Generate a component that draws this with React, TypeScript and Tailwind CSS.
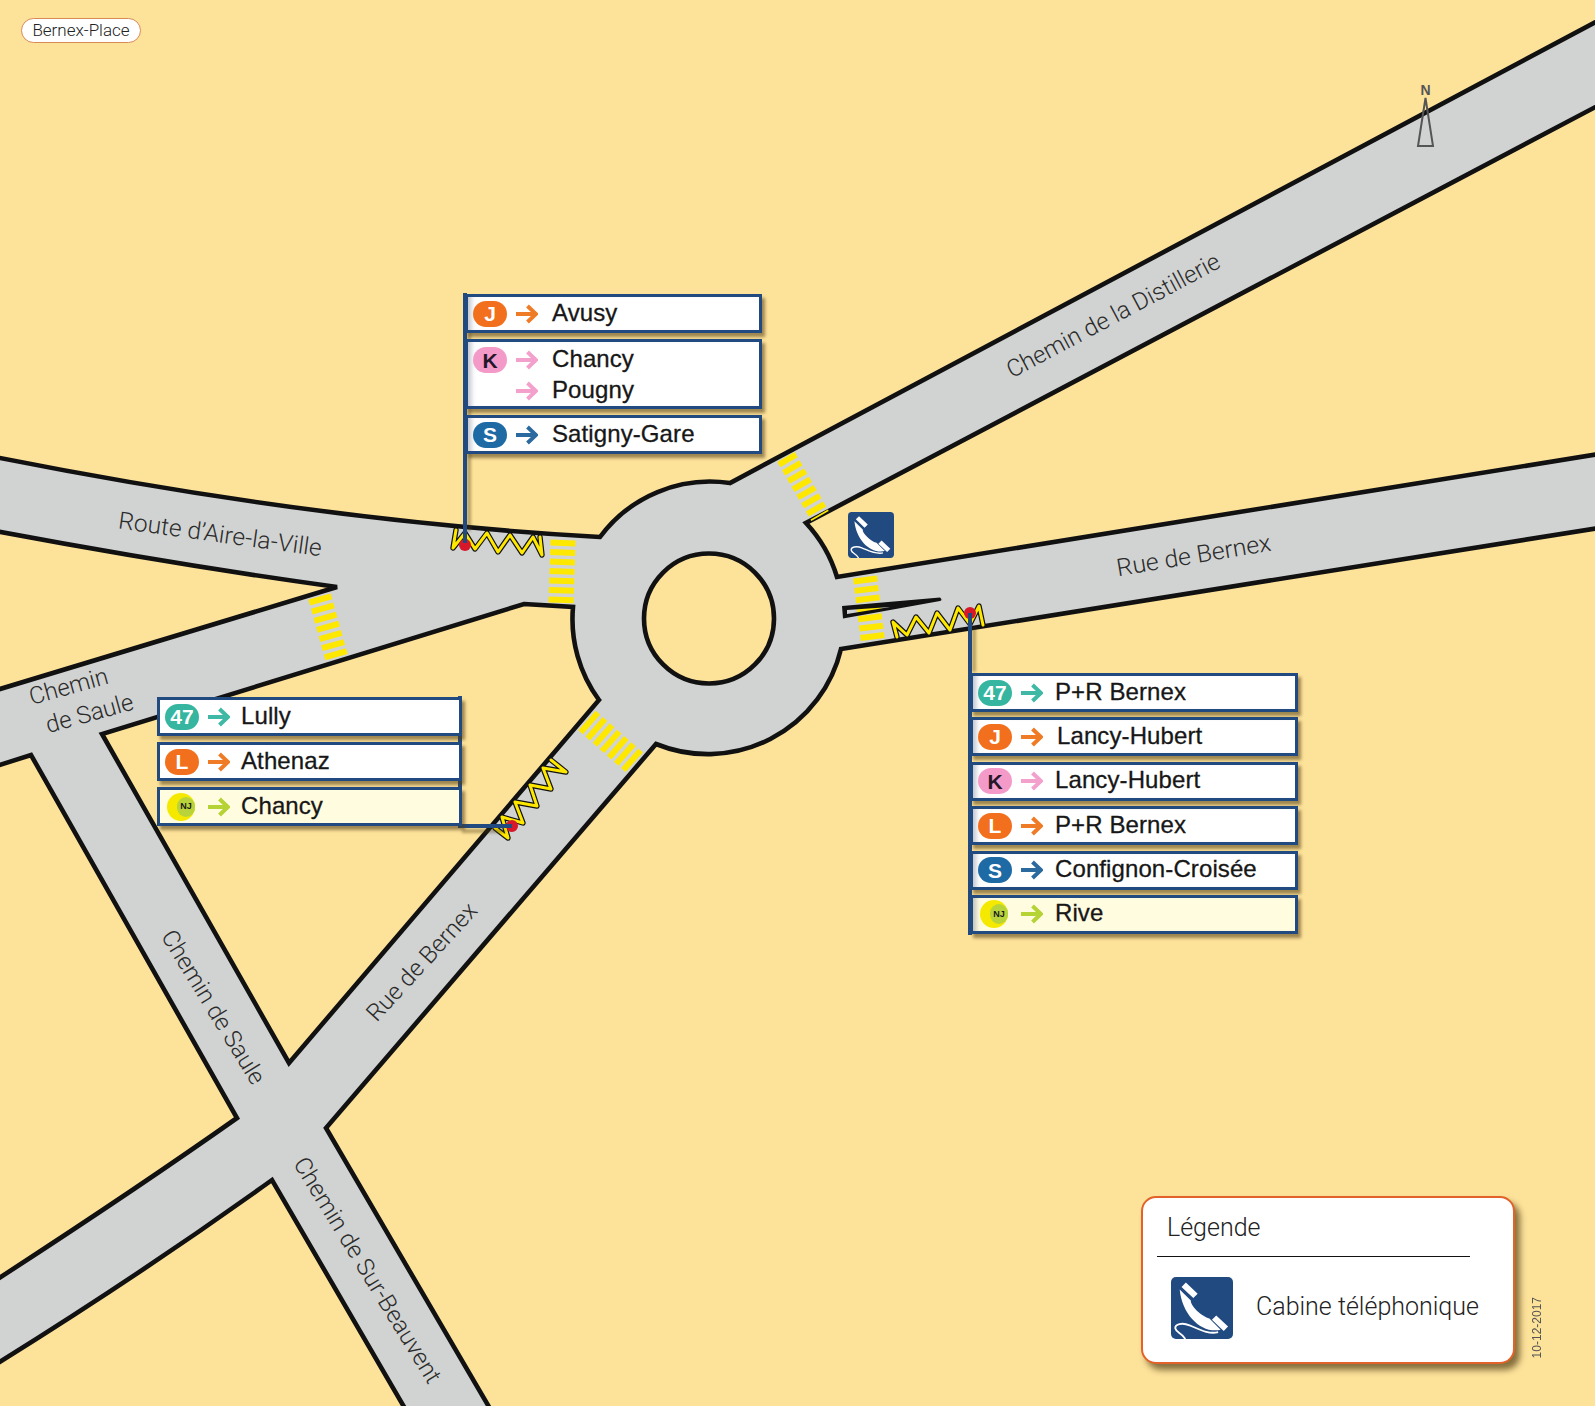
const ROAD_PATH =
  "M-10 456 C200 498 400 526 600 537 A137 137 0 0 1 730 483 L1605 17 L1605 102 L806 523 A137 137 0 0 1 837 577 L1605 453 L1605 527 L841 649 A137 137 0 0 1 656 744 L326 1128 L499 1424 L414 1424 L272 1180 Q140 1275 -10 1368 L-10 1284 Q135 1190 237 1118 L31 755 L-10 768 L-10 692 L337 587 Q170 564 -10 530 Z " +
  "M524 604 L573 607 A137 137 0 0 0 599 700 L289 1063 L102 734 Z";

const stripes = [
  { x1: 786, y1: 457, x2: 820, y2: 516, w: 20 },
  { x1: 563, y1: 540, x2: 561, y2: 604, w: 25 },
  { x1: 319.5, y1: 596.5, x2: 337, y2: 659, w: 23 },
  { x1: 587, y1: 720.5, x2: 635, y2: 763, w: 26 },
  { x1: 865, y1: 577, x2: 873, y2: 642, w: 24 },
];

const zigzags = [
  "456,530 453,548 465,533 475,549 487,533 498,552 510,535 522,553 533,537 542,555 540,537",
  "897,637 893,622 907,635 916,617 929,633 937,613 950,630 958,608 970,624 979,606 983,625",
  "495,828 508,838 502,817 523,823 515,802 537,806 530,785 551,789 543,768 566,772 551,760",
];

const roadLabels = [
  { text: "Route d’Aire-la-Ville", x: 220, y: 536, a: 7.8, len: 205 },
  { text: "Chemin de la Distillerie", x: 1114, y: 317, a: -28 },
  { text: "Rue de Bernex", x: 1194, y: 557, a: -9.5, len: 156 },
  { text: "Chemin", x: 69, y: 688, a: -15.5, len: 81 },
  { text: "de Saule", x: 90, y: 715, a: -15.5, len: 90 },
  { text: "Rue de Bernex", x: 423, y: 963, a: -47.5 },
  { text: "Chemin de Saule", x: 212, y: 1008, a: 58.5, len: 176 },
  { text: "Chemin de Sur-Beauvent", x: 366, y: 1271, a: 58.5, len: 260 },
];

function Arrow({ className }: { className: string }) {
  return (
    <svg viewBox="0 0 22 20" className={`h-[20px] w-[22px] shrink-0 ${className}`} fill="none" stroke="currentColor" strokeWidth="4">
      <path d="M0 10H19M11.5 2l8.5 8-8.5 8" />
    </svg>
  );
}

function PhoneIcon({ className }: { className: string }) {
  return (
    <svg viewBox="0 0 100 100" className={className}>
      <rect width="100" height="100" rx="8" fill="#214a80" />
      <path d="M24 9L43 27L36 34L17 16Z M73 62L92 80L85 87L66 69Z" fill="#fff" />
      <path d="M14 20L32 38C31 46 48 63 62 67L80 85C50 92 18 62 14 20Z" fill="#fff" />
      <path d="M76 89C60 93 45 84 30 78C18 73 6 76 7 83C8 90 18 90 23 100" fill="none" stroke="#fff" strokeWidth="3" />
    </svg>
  );
}

const badgeShape = "flex h-[26px] w-[34px] shrink-0 items-center justify-center rounded-[13px] text-[21px] leading-none font-bold";

function Badge({ kind }: { kind: string }) {
  if (kind === "47") return <div className={`${badgeShape} bg-[#36b5a0] text-white`}>47</div>;
  if (kind === "J") return <div className={`${badgeShape} bg-[#f2701d] text-white`}>J</div>;
  if (kind === "K") return <div className={`${badgeShape} bg-[#f49ac9] text-[#25172a]`}>K</div>;
  if (kind === "L") return <div className={`${badgeShape} bg-[#f2701d] text-white`}>L</div>;
  if (kind === "S") return <div className={`${badgeShape} bg-[#1d6aa5] text-white`}>S</div>;
  return (
    <div className="relative flex h-[34px] w-[34px] shrink-0 items-center pl-[2px]">
      <div className="h-[28px] w-[28px] rounded-full bg-[#f6e900]" />
      <div className="absolute top-[7px] left-[12px] flex h-[20px] w-[18px] items-center justify-center rounded-full bg-[#b9d43a] text-[9px] font-bold text-[#1a1a1a]">
        NJ
      </div>
    </div>
  );
}

const arrowColor: Record<string, string> = {
  "47": "text-[#3fb9a5]",
  J: "text-[#f07b26]",
  K: "text-[#f4a0cc]",
  L: "text-[#f07b26]",
  S: "text-[#2b6a9e]",
  NJ: "text-[#b5d334]",
};

type EntryProps = { kind: string; dest: string; blank?: boolean; textClass?: string };

function Entry({ kind, dest, blank, textClass = "ml-[14px]" }: EntryProps) {
  return (
    <div className="flex items-center">
      {blank ? <div className="w-[34px] shrink-0" /> : <Badge kind={kind} />}
      <Arrow className={`ml-[9px] ${arrowColor[kind]}`} />
      <span className={`pb-[2px] text-[24px] leading-[28px] tracking-[0.1px] text-[#171717] [-webkit-text-stroke:0.3px_#171717] ${textClass}`}>{dest}</span>
    </div>
  );
}

function Row({ kind, dest, pole, textClass }: EntryProps & { pole?: boolean }) {
  const bg = kind === "NJ" ? "bg-[#fffce0]" : "bg-white";
  const shadow = pole
    ? "shadow-[inset_7px_0_5px_-4px_rgba(70,80,110,0.35),3px_4px_3px_rgba(80,60,20,0.55)]"
    : "shadow-[3px_4px_3px_rgba(80,60,20,0.55)]";
  return (
    <div className={`flex h-[39px] items-center border-[3px] border-[#214a80] pl-[5px] ${bg} ${shadow}`}>
      <Entry kind={kind} dest={dest} textClass={textClass} />
    </div>
  );
}

export default function App() {
  return (
    <div className="relative h-[1406px] w-[1595px] overflow-hidden bg-[#fde29a] font-['Liberation_Sans',sans-serif]">
      <svg className="absolute inset-0" width="1595" height="1406" viewBox="0 0 1595 1406">
        <path d={ROAD_PATH} fill="#d1d3d2" fillRule="evenodd" stroke="#111" strokeWidth="4.6" strokeLinejoin="miter" />
        <circle cx="709" cy="618.5" r="65" fill="#fde29a" stroke="#111" strokeWidth="4.6" />

        {stripes.map((s) => (
          <line key={s.x1} x1={s.x1} y1={s.y1} x2={s.x2} y2={s.y2} stroke="#ffe800" strokeWidth={s.w} strokeDasharray="6 3.5" />
        ))}

        <path d="M842 606L940 597.5Q943 600 940 601L843 618.5Z M847 610L890 607L847 614Z" fill="#111" fillRule="evenodd" />

        {zigzags.map((p) => (
          <g key={p} fill="none" strokeLinejoin="round" strokeLinecap="round">
            <polyline points={p} stroke="#111" strokeWidth="5.4" />
            <polyline points={p} stroke="#ffe800" strokeWidth="3" />
          </g>
        ))}

        <circle cx="465" cy="545" r="6" fill="#d7182a" />
        <circle cx="970" cy="613" r="6" fill="#d7182a" />
        <circle cx="512" cy="826" r="6" fill="#d7182a" />

        {/* poles and their shadows */}
        <g fill="none" stroke="#4a3c10" strokeWidth="4" opacity="0.4" className="blur-[1.5px]">
          <path d="M469 300V531" />
          <path d="M974 628V672" />
          <path d="M462 831H505" />
        </g>
        <g fill="none" stroke="#214a80" strokeWidth="4">
          <path d="M465 293V543" />
          <path d="M970 613V935" />
          <path d="M460 696V826H512" />
        </g>

        {roadLabels.map((l) => (
          <text
            key={l.text + l.x}
            transform={`translate(${l.x} ${l.y}) rotate(${l.a})`}
            textAnchor="middle"
            dominantBaseline="middle"
            fill="#2b2b2b"
            textLength={l.len}
            lengthAdjust="spacingAndGlyphs"
            className="font-['Roboto',sans-serif] text-[24px] font-light"
          >
            {l.text}
          </text>
        ))}

        {/* north arrow */}
        <path d="M1425.5 98L1418 146H1433Z" fill="none" stroke="#555" strokeWidth="2" />
        <text x="1425.5" y="95" textAnchor="middle" fill="#555" className="text-[14px] font-bold">
          N
        </text>
      </svg>

      {/* name of the stop */}
      <div className="absolute top-[18px] left-[21px] flex h-[25px] w-[120px] items-center justify-center rounded-full border border-[#d98a55] bg-white font-['Roboto',sans-serif] text-[17px] font-light text-[#222]">
        Bernex-Place
      </div>

      <PhoneIcon className="absolute top-[512px] left-[848px] h-[46px] w-[46px]" />

      {/* north panel */}
      <div className="absolute top-[294px] left-[465px] flex w-[297px] flex-col gap-[6px]">
        <Row kind="J" dest="Avusy" pole />
        <div className="flex h-[70px] flex-col justify-center gap-[1px] border-[3px] border-[#214a80] bg-white pt-[3px] pl-[5px] shadow-[inset_7px_0_5px_-4px_rgba(70,80,110,0.35),3px_4px_3px_rgba(80,60,20,0.55)]">
          <Entry kind="K" dest="Chancy" />
          <Entry kind="K" dest="Pougny" blank />
        </div>
        <Row kind="S" dest="Satigny-Gare" pole />
      </div>

      {/* west panel */}
      <div className="absolute top-[697px] left-[157px] flex w-[305px] flex-col gap-[6px]">
        <Row kind="47" dest="Lully" textClass="ml-[11px]" />
        <Row kind="L" dest="Athenaz" textClass="ml-[11px]" />
        <Row kind="NJ" dest="Chancy" textClass="ml-[11px]" />
      </div>

      {/* east panel */}
      <div className="absolute top-[673px] left-[970px] flex w-[328px] flex-col gap-[5.4px]">
        <Row kind="47" dest="P+R Bernex" pole textClass="ml-[12px]" />
        <Row kind="J" dest="Lancy-Hubert" pole textClass="ml-[14px]" />
        <Row kind="K" dest="Lancy-Hubert" pole textClass="ml-[12px]" />
        <Row kind="L" dest="P+R Bernex" pole textClass="ml-[12px]" />
        <Row kind="S" dest="Confignon-Croisée" pole textClass="ml-[12px]" />
        <Row kind="NJ" dest="Rive" pole textClass="ml-[12px]" />
      </div>

      {/* legend */}
      <div className="absolute top-[1196px] left-[1141px] h-[168px] w-[374px] rounded-[15px] border-[2.5px] border-[#e2622a] bg-white shadow-[5px_6px_6px_rgba(70,50,10,0.65)]">
        <div className="pt-[13px] pl-[24px] font-['Roboto',sans-serif] text-[25px] leading-[34px] font-light text-[#222]">Légende</div>
        <div className="mt-[11px] ml-[14px] h-px w-[313px] bg-[#111]" />
        <div className="mt-[20px] ml-[28px] flex items-center">
          <PhoneIcon className="h-[62px] w-[62px] shrink-0" />
          <span className="-mt-[2px] ml-[23px] font-['Roboto',sans-serif] text-[25px] font-light whitespace-nowrap text-[#222]">Cabine téléphonique</span>
        </div>
      </div>

      <div className="absolute top-[1297px] left-[1530px] rotate-180 text-[12px] leading-[14px] text-[#555] [writing-mode:vertical-rl]">10-12-2017</div>
    </div>
  );
}
